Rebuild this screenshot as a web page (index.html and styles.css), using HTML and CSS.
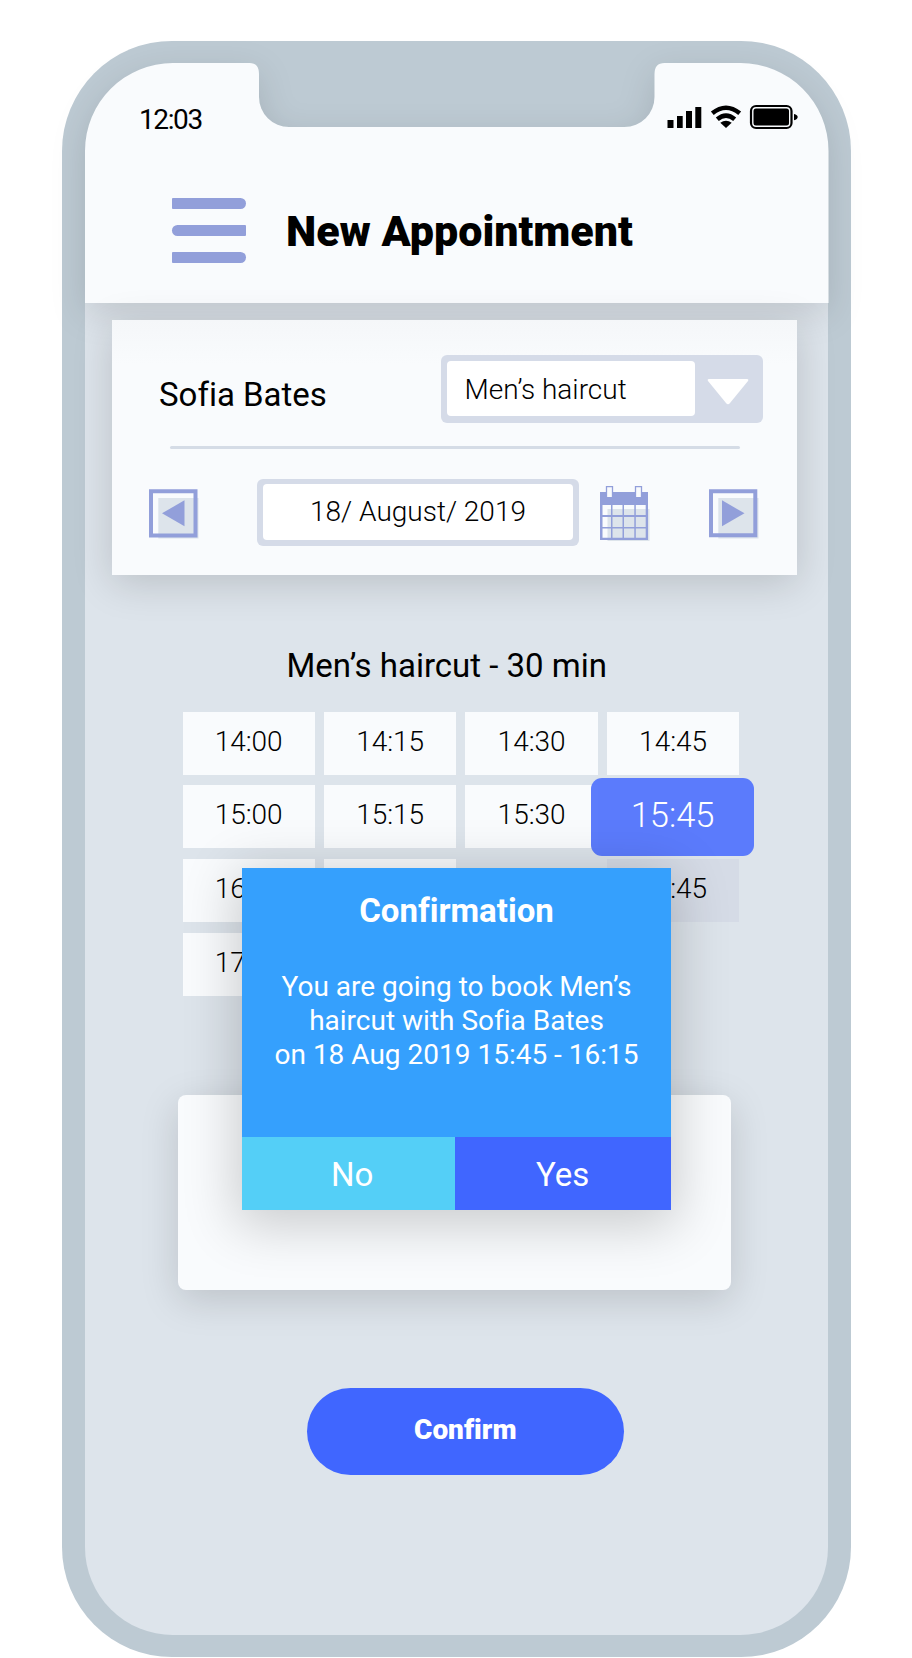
FILE: index.html
```html
<!DOCTYPE html>
<html lang="en">
<head>
<meta charset="utf-8">
<title>New Appointment</title>
<link rel="stylesheet" href="styles.css">
</head>
<body>
<div class="phone">
  <div class="screen">
    <header class="header">
      <svg class="header-shape" width="743.500" height="240" viewBox="0 0 743.500 240"><path d="M0 240V88A88 88 0 0 1 88 0H164.500Q174 0 174 11V34A30 30 0 0 0 204 64H539.500A30 30 0 0 0 569.500 34V11Q569.500 0 579.500 0H655.500A88 88 0 0 1 743.500 88V240Z" fill="#f9fbfd"/></svg>
      <div class="status">
        <span class="clock">12:03</span>
        <svg class="status-icons" width="131" height="26" viewBox="667 104 131 26">
          <path d="M667.500 120h6v8h-6zM677 116h5.700v12H677zM686 111h6v17h-6zM695.300 107h6v21h-6z"/>
          <path d="M726 128L720.300 122.700Q726 119 731.700 122.700Z"/>
          <path d="M717.300 119.300Q726 111.800 734.700 119.300M712.300 113.200Q726 102.300 739.700 113.200" fill="none" stroke="#000" stroke-width="4.600"/>
          <rect x="751" y="106" width="40.500" height="22" rx="5" fill="none" stroke="#000" stroke-width="2.200"/>
          <rect x="753.500" y="108.600" width="35.500" height="16.800" rx="2.500"/>
          <path d="M794 114Q797.700 114.800 797.700 117T794 120.300Z"/>
        </svg>
      </div>
      <div class="titlebar">
        <div class="menu"><i></i><i></i><i></i></div>
        <h1 class="title">New Appointment</h1>
      </div>
    </header>

    <section class="card">
      <div class="row row-service">
        <span class="name">Sofia Bates</span>
        <div class="select">
          <span class="select-value">Men’s haircut</span>
          <svg class="caret" width="42" height="28" viewBox="0 0 42 28"><path d="M2 1H40Q42 1 41 3L23 25Q21 27.500 19 25L1 3Q0 1 2 1Z" fill="#fff"/></svg>
        </div>
      </div>
      <div class="divider"></div>
      <div class="row row-date">
        <svg class="prev" width="51" height="51" viewBox="0 0 51 51"><path d="M9.300 9H49.500v40.500H9.300z" fill="#dde4eb"/><path d="M2 2.300H46.500V46.500H2z" fill="none" stroke="#929fda" stroke-width="4"/><path d="M13 24.300L35.500 11.300V37.300Z" fill="#929fda"/></svg>
        <div class="date"><span>18/ August/ 2019</span></div>
        <svg class="calendar" width="51" height="56" viewBox="0 0 51 56"><path d="M7.500 23H49.500v32H7.500z" fill="#dde4eb"/><path d="M0 6H48V54H0ZM2.500 19V29H11V19ZM12.500 19V29H22.500V19ZM24 19V29H34.300V19ZM35.800 19V29H45.700V19ZM2.500 31V41H11V31ZM12.500 31V41H22.500V31ZM24 31V41H34.300V31ZM35.800 31V41H45.700V31ZM2.500 42.500V51.700H11V42.500ZM12.500 42.500V51.700H22.500V42.500ZM24 42.500V51.700H34.300V42.500ZM35.800 42.500V51.700H45.700V42.500Z" fill="#929fda" fill-rule="evenodd"/><path d="M6.500 .7h6v11h-6zM35.500 .7h6v11h-6z" fill="#f9fbfd" stroke="#929fda" stroke-width="1.300"/></svg>
        <svg class="next" width="51" height="51" viewBox="0 0 51 51"><path d="M9.300 9H49.500v40.500H9.300z" fill="#dde4eb"/><path d="M2 2.300H46.300V46.300H2z" fill="none" stroke="#929fda" stroke-width="4"/><path d="M35.500 24.300L13 11.300V37.300Z" fill="#929fda"/></svg>
      </div>
    </section>

    <h2 class="service">Men’s haircut - 30 min</h2>

    <div class="slots">
      <span class="slot">14:00</span><span class="slot">14:15</span><span class="slot">14:30</span><span class="slot">14:45</span>
      <span class="slot">15:00</span><span class="slot">15:15</span><span class="slot">15:30</span><span class="slot selected">15:45</span>
      <span class="slot">16:00</span><span class="slot"></span><span class="slot empty"></span><span class="slot taken">16:45</span>
      <span class="slot">17:00</span>
    </div>

    <div class="notes"></div>
    <button class="confirm">Confirm</button>

    <div class="modal">
      <h3 class="modal-title">Confirmation</h3>
      <p class="modal-text">You are going to book Men’s<br>haircut with Sofia Bates<br>on 18 Aug 2019 15:45 - 16:15</p>
      <div class="modal-actions">
        <button class="no">No</button>
        <button class="yes">Yes</button>
      </div>
    </div>
  </div>
</div>
</body>
</html>
```
FILE: styles.css
```css
* { box-sizing: border-box; }
body { margin: 0; height: 1658px; overflow: hidden; background: #fff; font-family: Roboto, sans-serif; font-variant-ligatures: none; color: #000; }
h1, h2, h3, p { margin: 0; }
button { border: 0; padding: 0; font-family: inherit; font-variant-ligatures: none; color: #fff; }
svg { display: block; flex: none; }

.phone { width: 789.500px; height: 1616px; margin: 41px 0 0 61.500px; padding: 22px 23px; background: #bdcad3; border-radius: 110px; }
.screen { position: relative; width: 743.500px; height: 1572px; background: linear-gradient(#bdcad3 200px, #dde4eb 200px); border-radius: 88px; display: flex; flex-direction: column; }

.header { position: relative; height: 240px; flex: none; }
.header-shape { position: absolute; left: 0; top: 0; overflow: visible; filter: drop-shadow(0 10px 17px rgba(0, 0, 0, .12)); }
.status { position: relative; height: 111px; padding: 0 30.500px 0 54.500px; display: flex; align-items: center; justify-content: space-between; }
.clock { font-size: 28px; letter-spacing: -1.400px; margin-top: 1px; }
.status-icons { margin-top: -3px; }
.titlebar { position: relative; height: 129px; padding: 0 0 16px 87.500px; display: flex; align-items: center; }
.menu { width: 74px; display: flex; flex-direction: column; gap: 15.700px; }
.menu i { height: 11.300px; background: #929fda; border-radius: 1px 6px 6px 1px; }
.menu i:nth-child(2) { border-radius: 6px 1px 1px 6px; }
.title { margin-left: 40px; font-size: 43px; font-weight: 900; white-space: nowrap; }

.card { position: relative; flex: none; width: 685.500px; height: 255px; margin: 17px 0 0 27px; background: linear-gradient(#f5f7f9, #f9fbfd 45px); box-shadow: 0 8px 38px rgba(0, 0, 0, .16); }
.row { display: flex; align-items: center; }
.row-service { height: 125px; padding: 13px 34.500px 0 47.500px; justify-content: space-between; }
.name { font-size: 33px; margin-top: 11px; white-space: nowrap; }
.select { width: 322px; height: 68px; padding: 6px 14px 7px 6px; border-radius: 6px; background: #d5dbe8; display: flex; align-items: center; justify-content: space-between; }
.select-value { width: 248.500px; height: 55px; padding-left: 18px; line-height: 57px; border-radius: 4px; background: #fff; font-size: 28px; font-weight: 300; }
.caret { margin-top: 6px; }
.divider { width: 570px; height: 3px; margin: 1px 0 -1px 58px; border-radius: 2px; background: #d5dce6; }
.row-date { height: 129px; padding: 0 0 0 37px; align-items: center; }
.date { width: 322px; height: 67px; margin-left: 57.500px; padding: 5px 6px 6px; background: #d5dbe8; border-radius: 6px; }
.date span { display: block; height: 56px; line-height: 56px; border-radius: 4px; background: #fff; text-align: center; font-size: 28px; font-weight: 300; }
.calendar { margin: 2px 0 0 20.500px; }
.next { margin-left: 58px; }
.prev, .next { margin-top: 3px; }

.service { height: 40px; margin: 71px 0 0 202px; font-size: 33px; line-height: 40px; font-weight: 400; white-space: nowrap; }
.slots { flex: none; height: 285px; margin: 25.500px 0 0 98px; display: grid; grid-template-columns: repeat(4, 132.300px); grid-auto-rows: 63.200px; gap: 10.500px 9.200px; }
.slot { background: #f9fbfd; text-align: center; font-size: 28px; font-weight: 300; line-height: 60.800px; }
.taken { background: #d5dbe6; }
.empty { background: none; }
.selected { position: relative; margin: -7.500px -15px -8px -16px; border-radius: 11px; background: rgba(85, 119, 252, .96); color: #fff; font-size: 34.500px; line-height: 75px; }

.notes { flex: none; width: 553px; height: 195px; margin: 98px 0 0 93.500px; border-radius: 8px; background: #f9fbfd; box-shadow: 0 10px 38px rgba(0, 0, 0, .15); }
.confirm { flex: none; width: 317.500px; height: 87px; margin: 98px 0 0 222px; padding-bottom: 3px; border-radius: 44px; background: #4066ff; font-size: 28px; font-weight: 900; }

.modal { position: absolute; left: 157.500px; top: 805px; width: 429px; height: 342px; background: #35a0fd; color: #fff; box-shadow: 0 10px 50px 6px rgba(0, 0, 0, .19); display: flex; flex-direction: column; text-align: center; }
.modal-title { height: 88px; line-height: 86px; font-size: 33px; font-weight: 700; }
.modal-text { flex: 1; padding-top: 14px; font-size: 28px; line-height: 34px; white-space: nowrap; }
.modal-actions { display: grid; grid-template-columns: 212.500px 1fr; height: 73px; }
.modal-actions button { font-size: 33px; padding-top: 2px; }
.modal-actions .no { background: #54cff7; padding-left: 8px; }
.yes { background: #4066ff; }
```
